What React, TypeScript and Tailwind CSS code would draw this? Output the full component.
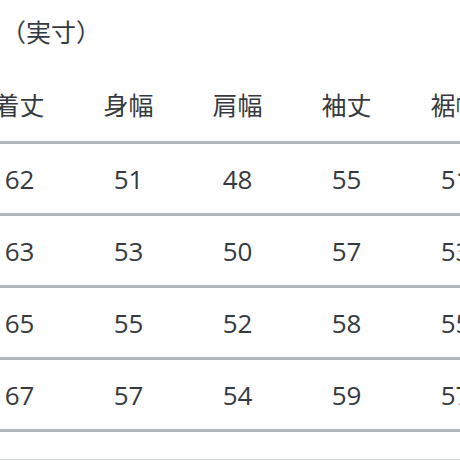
import React from 'react'

const headers = ['着丈', '身幅', '肩幅', '袖丈', '裾幅']
const rows = [
  ['62', '51', '48', '55', '51'],
  ['63', '53', '50', '57', '53'],
  ['65', '55', '52', '58', '55'],
  ['67', '57', '54', '59', '57'],
]

const App = () => {
  return (
    <div
      className="w-[460px] h-[460px] overflow-hidden bg-white text-[#363a40]"
      style={{ fontFamily: "'Open Sans', 'Noto Sans CJK JP', sans-serif" }}
    >
      {/* タイトル */}
      <div className="h-[64px] pt-[18px] pl-[1px] text-[25px] leading-[28px]">（実寸）</div>

      {/* サイズ表 */}
      <div className="ml-[-35px] w-[545px]">
        <div className="flex h-[80px] items-end pb-[23px] border-b-[3px] border-[#adb5b9]">
          {headers.map((h) => (
            <div key={h} className="w-[109px] text-center text-[25px] leading-[26px]">
              {h}
            </div>
          ))}
        </div>
        {rows.map((r, i) => (
          <div key={i} className="flex h-[72px] items-center border-b-[3px] border-[#adb5b9]">
            {r.map((v, j) => (
              <div key={j} className="w-[109px] text-center text-[26px] leading-[30px]">
                {v}
              </div>
            ))}
          </div>
        ))}
        <div className="h-[27px]" />
        <div className="border-t-[2px] border-[#d4d8da]" />
      </div>
    </div>
  )
}

export default App
